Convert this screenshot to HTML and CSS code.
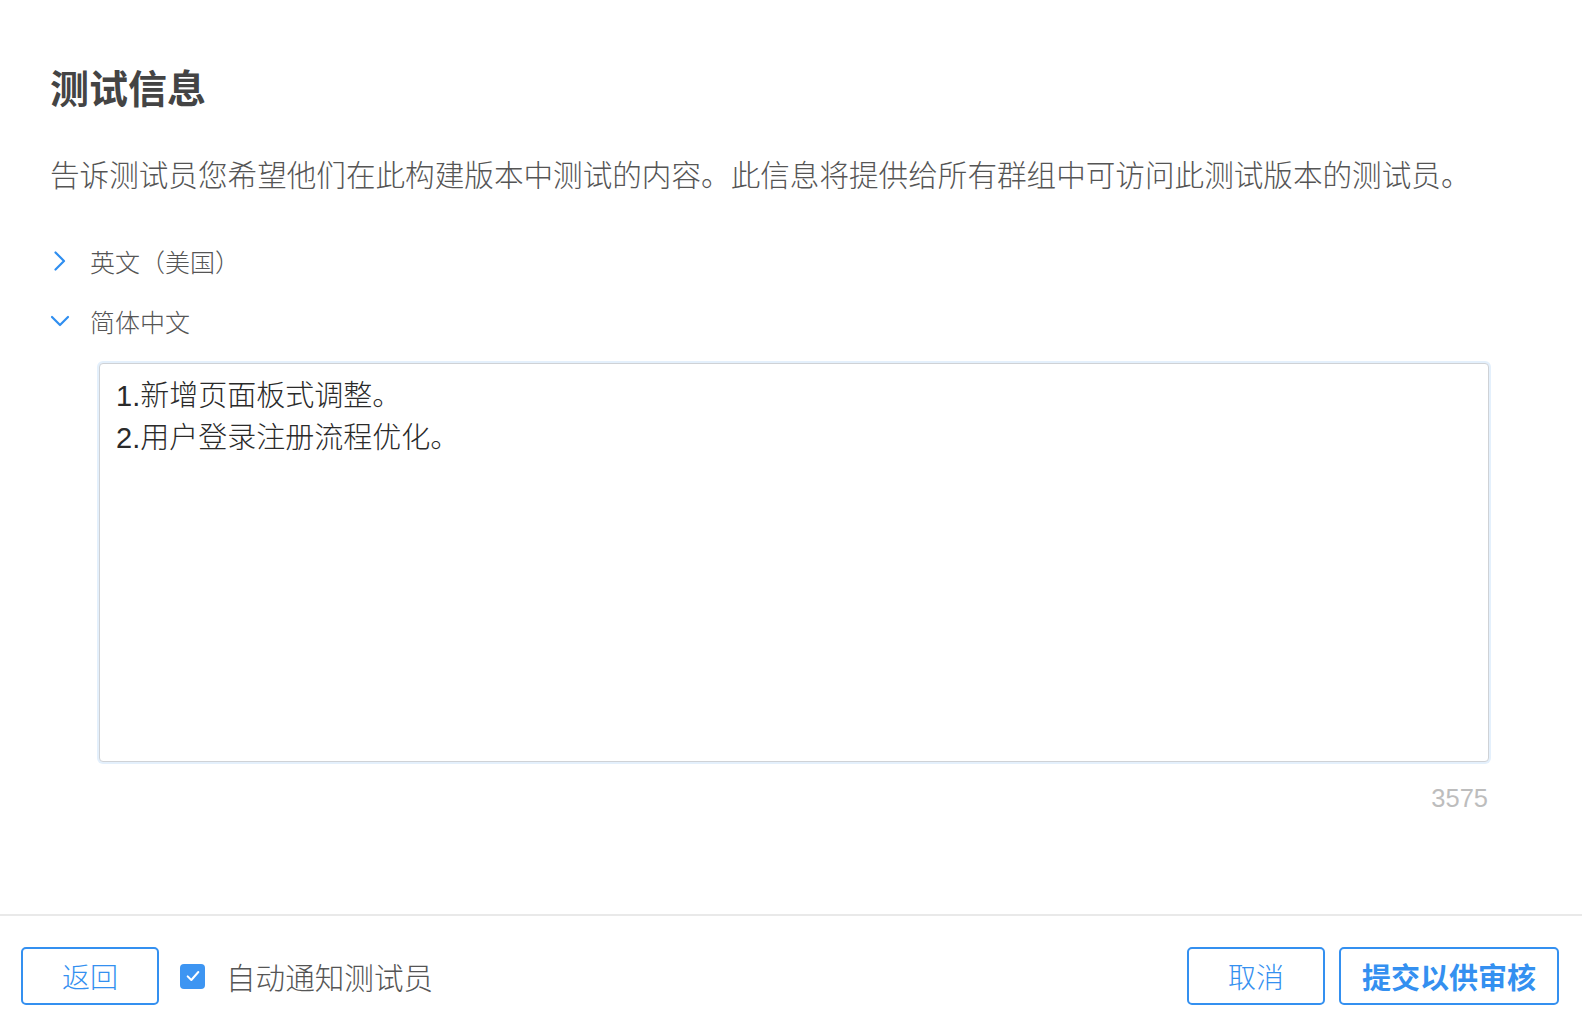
FILE: index.html
```html
<!DOCTYPE html>
<html lang="zh-CN">
<head>
    <meta charset="UTF-8">
    <meta name="viewport" content="width=device-width, initial-scale=1.0">
    <title>测试信息</title>
    <link rel="stylesheet" href="styles.css">
</head>
<body>
    <div class="page">
        <main class="content">
            <h1 class="title">测试信息</h1>
            <p class="intro">告诉测试员您希望他们在此构建版本中测试的内容。此信息将提供给所有群组中可访问此测试版本的测试员。</p>

            <div class="locales">
                <div class="locale">
                    <svg class="chevron" viewBox="0 0 20 20" width="20" height="20">
                        <path d="M5.5 1.5 L14 10 L5.5 18.5" />
                    </svg>
                    <span>英文（美国）</span>
                </div>
                <div class="locale">
                    <svg class="chevron" viewBox="0 0 20 20" width="20" height="20">
                        <path d="M2 6 L10 14 L18 6" />
                    </svg>
                    <span>简体中文</span>
                </div>
                <div class="locale-body">
                    <textarea class="notes" spellcheck="false">1.新增页面板式调整。
2.用户登录注册流程优化。</textarea>
                    <div class="counter">3575</div>
                </div>
            </div>
        </main>

        <footer class="actions">
            <button class="btn">返回</button>
            <label class="notify">
                <span class="checkbox">
                    <svg viewBox="0 0 24 24" width="16" height="16">
                        <path d="M4 12.5 L9.5 18 L20 6" />
                    </svg>
                </span>
                <span>自动通知测试员</span>
            </label>
            <div class="right-actions">
                <button class="btn">取消</button>
                <button class="btn btn-wide">提交以供审核</button>
            </div>
        </footer>
    </div>
</body>
</html>
```

FILE: styles.css
```css
body {
    margin: 0;
    background: #fff;
    font-family: 'Liberation Sans', 'Noto Sans CJK SC', sans-serif;
}
.page {
    display: flex;
    flex-direction: column;
    height: 100vh;
}
.content {
    flex: 1;
    padding: 70px 93px 0 50px;
}
.title {
    margin: 0;
    font-size: 39px;
    line-height: 39px;
    font-weight: 600;
    color: #444;
}
.intro {
    margin: 52px 0 0;
    font-size: 29.6px;
    line-height: 29px;
    font-weight: 300;
    color: #555;
    white-space: nowrap;
}
.locales {
    margin-top: 51px;
}
.locale {
    display: flex;
    align-items: center;
    gap: 20px;
    height: 40px;
    font-size: 25px;
    font-weight: 300;
    color: #555;
}
.locale + .locale {
    margin-top: 20px;
}
.chevron {
    fill: none;
    stroke: #2f8ef0;
    stroke-width: 2.2;
    stroke-linecap: round;
    stroke-linejoin: round;
}
.locale-body {
    margin: 22px 0 0 49px;
}
.notes {
    display: block;
    box-sizing: border-box;
    width: 100%;
    height: 399px;
    margin: 0;
    padding: 11px 16px 0;
    border: 1px solid #cfd2d6;
    border-radius: 4px;
    box-shadow: 0 0 0 2px #e4f0fc;
    font-family: inherit;
    font-size: 29px;
    font-weight: 300;
    line-height: 42px;
    color: #2a2a2a;
    resize: none;
    outline: none;
    overflow: hidden;
}
.counter {
    margin-top: 24px;
    padding-right: 1px;
    text-align: right;
    font-size: 25.5px;
    line-height: 25px;
    color: #bdbdbd;
}
.actions {
    display: flex;
    align-items: center;
    border-top: 2px solid #e9e9e9;
    padding: 31px 23px 21px 21px;
}
.btn {
    box-sizing: border-box;
    width: 138px;
    height: 58px;
    padding: 0;
    border: 2px solid #3490f0;
    border-radius: 5px;
    background: #fff;
    color: #3490f0;
    font-family: inherit;
    font-size: 28px;
    font-weight: 300;
    cursor: pointer;
}
.btn-wide {
    width: 220px;
    font-size: 29px;
    font-weight: 700;
}
.notify {
    display: flex;
    align-items: center;
    gap: 21px;
    margin-left: 21px;
    font-size: 29.6px;
    font-weight: 300;
    color: #555;
}
.checkbox {
    display: flex;
    align-items: center;
    justify-content: center;
    width: 25px;
    height: 25px;
    border-radius: 4px;
    background: #3d95f2;
}
.checkbox svg {
    fill: none;
    stroke: #fff;
    stroke-width: 3;
    stroke-linecap: round;
    stroke-linejoin: round;
}
.right-actions {
    display: flex;
    gap: 14px;
    margin-left: auto;
}
```
